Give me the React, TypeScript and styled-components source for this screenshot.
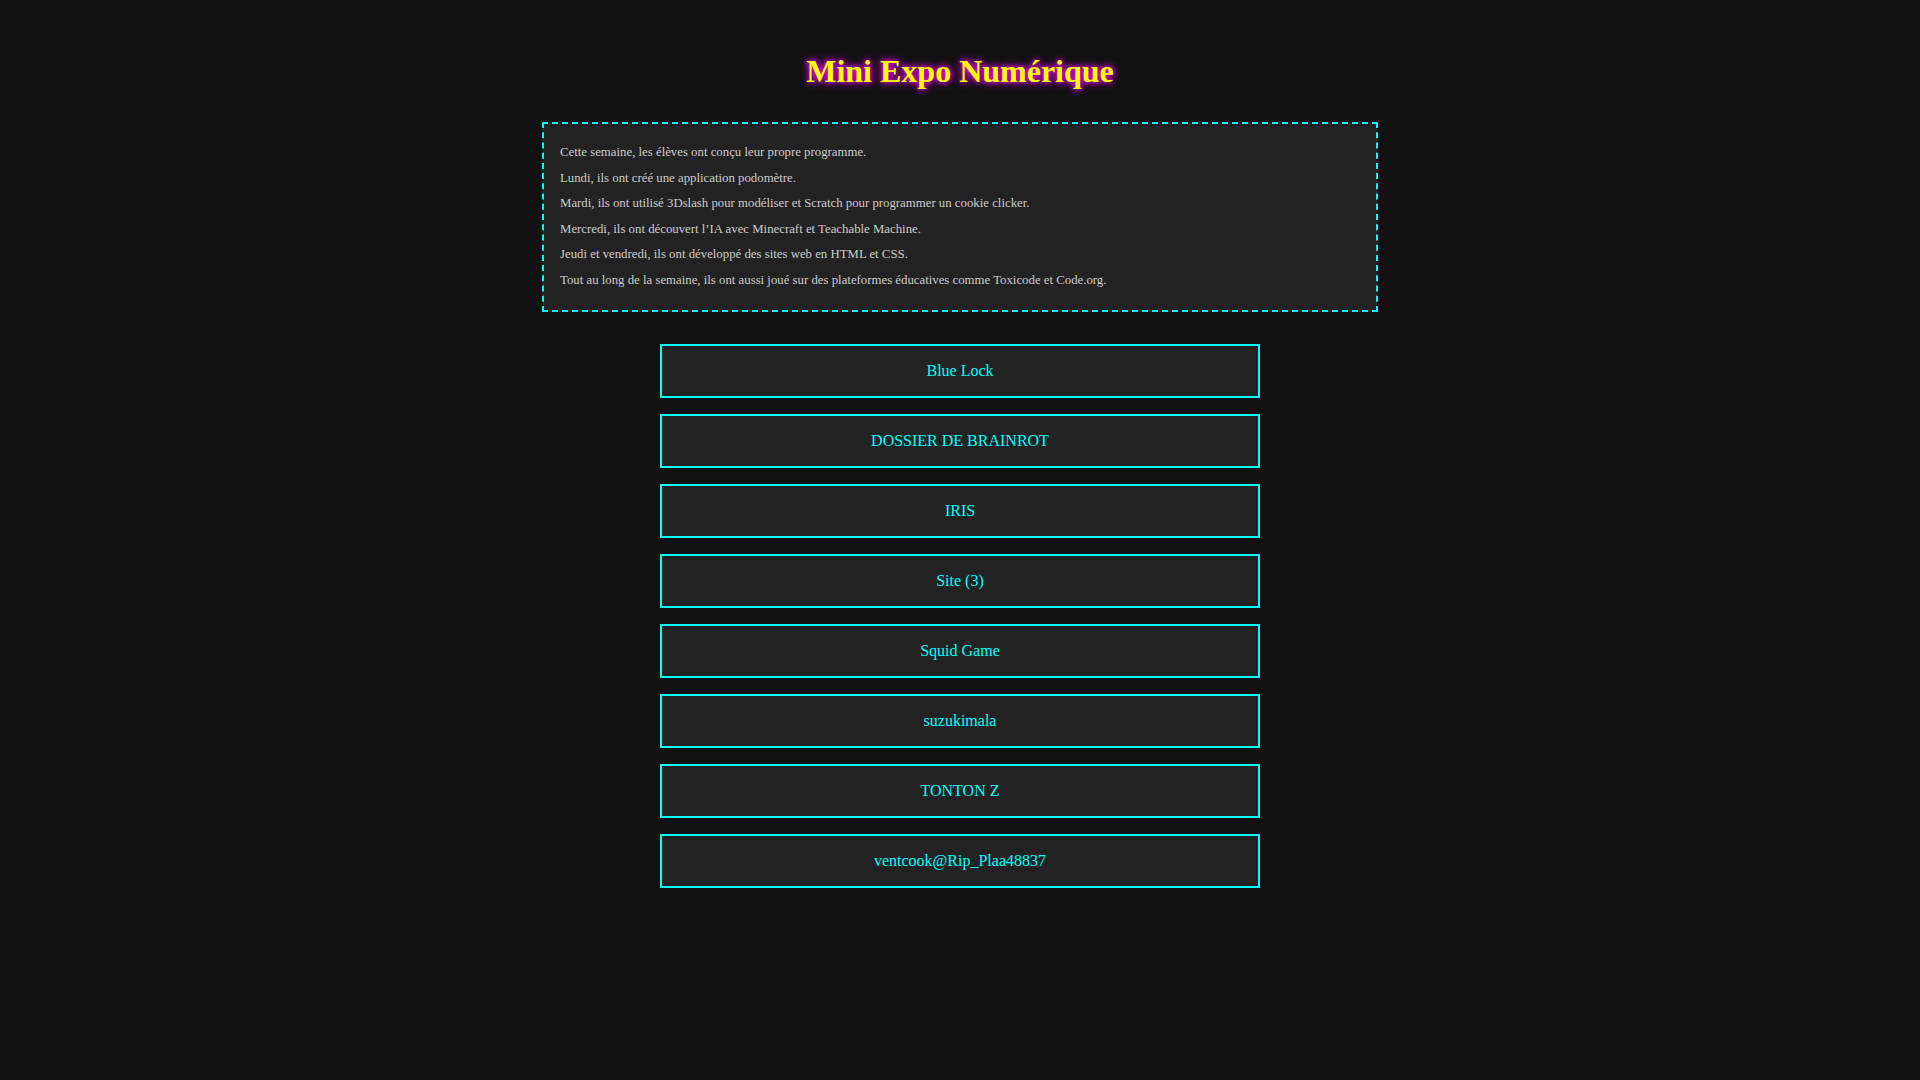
import React, { FC } from 'react';
import styled, { createGlobalStyle } from 'styled-components';

const projects = [
  'Blue Lock',
  'DOSSIER DE BRAINROT',
  'IRIS',
  'Site (3)',
  'Squid Game',
  'suzukimala',
  'TONTON Z',
  'ventcook@Rip_Plaa48837',
];

const intro = [
  'Cette semaine, les élèves ont conçu leur propre programme.',
  'Lundi, ils ont créé une application podomètre.',
  'Mardi, ils ont utilisé 3Dslash pour modéliser et Scratch pour programmer un cookie clicker.',
  'Mercredi, ils ont découvert l’IA avec Minecraft et Teachable Machine.',
  'Jeudi et vendredi, ils ont développé des sites web en HTML et CSS.',
  'Tout au long de la semaine, ils ont aussi joué sur des plateformes éducatives comme Toxicode et Code.org.',
];

const App: FC = () => {
  return (
    <>
      <GlobalStyle />
      <Page>
        <Title>Mini Expo Numérique</Title>

        <InfoBox>
          {intro.map((line) => (
            <InfoLine key={line}>{line}</InfoLine>
          ))}
        </InfoBox>

        <ProjectList>
          {projects.map((name) => (
            <ProjectButton key={name}>{name}</ProjectButton>
          ))}
        </ProjectList>
      </Page>
    </>
  );
};

export default App;

const GlobalStyle = createGlobalStyle`
  html, body {
    margin: 0;
    background: #111;
    min-height: 100%;
  }
  body {
    font-family: "Liberation Serif", "Times New Roman", serif;
  }
`;

const Page = styled.main`
  min-height: 100vh;
  box-sizing: border-box;
  padding: 53px 0 40px;
  display: flex;
  flex-direction: column;
  align-items: center;
  background: #111;
`;

const Title = styled.h1`
  margin: 0;
  font-size: 32px;
  font-weight: 700;
  color: #ff0;
  text-shadow: 0 0 5px #f0f, 0 0 10px #f0f;
`;

const InfoBox = styled.section`
  width: 800px;
  margin: 32px 0 32px;
  padding: 16px;
  background: #222;
  border: 2px dashed #0ff;
`;

const InfoLine = styled.p`
  margin: 0;
  font-size: 12.8px;
  line-height: 25.6px;
  color: #ccc;
`;

const ProjectList = styled.div`
  display: flex;
  flex-direction: column;
  gap: 16px;
  width: 600px;
`;

const ProjectButton = styled.button`
  width: 100%;
  padding: 16px;
  background: #222;
  border: 2px solid #0ff;
  color: #0ff;
  font-family: "Liberation Serif", "Times New Roman", serif;
  font-size: 16px;
  cursor: pointer;
`;
